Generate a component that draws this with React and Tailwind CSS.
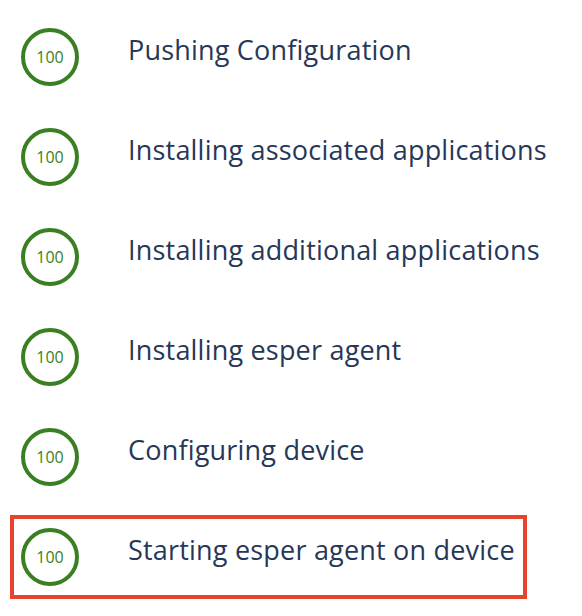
import React from 'react';

const steps = [
  'Pushing Configuration',
  'Installing associated applications',
  'Installing additional applications',
  'Installing esper agent',
  'Configuring device',
  'Starting esper agent on device',
];

const Progress = ({ value }) => (
  <div className="w-[58px] h-[58px] shrink-0 rounded-full border-[4px] border-[#3a7f22] flex items-center justify-center">
    <span className="text-[16px] leading-none text-[#3a7f22]">{value}</span>
  </div>
);

export default function App() {
  return (
    <div className="w-[582px] h-[616px] bg-white pl-[10px] pt-[15px]" style={{ fontFamily: '"Open Sans", "Noto Sans", sans-serif' }}>
      <div className="flex flex-col gap-4">
        {steps.map((label, i) => {
          const active = i === steps.length - 1;
          return (
            <div
              key={label}
              className={`w-[517px] h-[84px] border-4 pl-[7px] flex items-center ${
                active ? 'border-[#e8432c]' : 'border-transparent'
              }`}
            >
              <Progress value={100} />
              <span className="ml-[49px] pb-[13px] text-[27px] tracking-[0.2px] text-[#273757] whitespace-nowrap">{label}</span>
            </div>
          );
        })}
      </div>
    </div>
  );
}
